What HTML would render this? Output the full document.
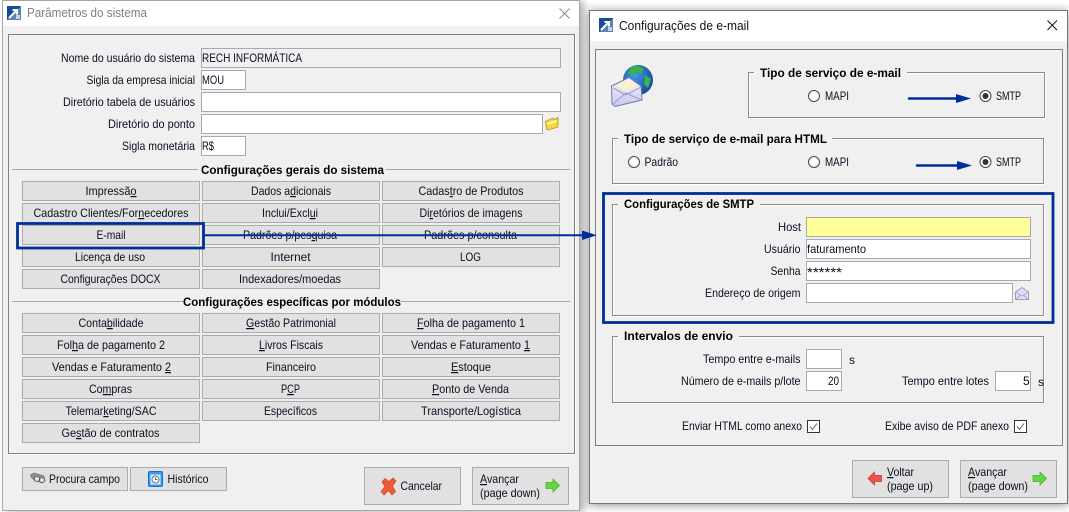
<!DOCTYPE html>
<html lang="pt"><head><meta charset="utf-8"><title>Configurações de e-mail</title>
<style>
html,body{margin:0;padding:0;background:#fff;width:1069px;height:512px;overflow:hidden}
.w{position:absolute;background:#f0f0f0;box-sizing:border-box}
svg{position:absolute;left:0;top:0}
text{font-family:"Liberation Sans",sans-serif;font-size:12px;fill:#0c0c20}
.m{text-anchor:middle}.e{text-anchor:end}
.h{font-weight:bold;fill:#000}
.b{fill:#e1e1e1;stroke:#ababab}
.i{fill:#fff;stroke:#a8a8b0}
.g{fill:none;stroke:#fff}
.g2{fill:none;stroke:#8a8a8a}
.p{fill:none;stroke:#808080}
.u{text-decoration:underline}
.bl{fill:none;stroke:#002e98}
</style></head><body>
<div class="w" style="left:2px;top:0;width:578px;height:511px;border:1px solid #a6a6a6;box-shadow:4px 1px 7px rgba(0,0,0,.3)"></div>
<div class="w" style="left:589px;top:10px;width:479px;height:494px;border:1px solid #777;box-shadow:0 1px 9px rgba(0,0,0,.45)"></div>
<svg width="1069" height="512" viewBox="0 0 1069 512" xmlns="http://www.w3.org/2000/svg">
<defs>
<radialGradient id="glb" cx=".4" cy=".35" r=".75"><stop offset="0" stop-color="#3f9be6"/><stop offset="1" stop-color="#0f3f92"/></radialGradient>
<linearGradient id="env" x1="0" y1="0" x2="0" y2="1"><stop offset="0" stop-color="#f4f4ff"/><stop offset="1" stop-color="#c8c8ee"/></linearGradient>
<g id="app"><rect width="14" height="14" fill="#174a98"/><path d="M0 14 L14 0 V14Z" fill="#5c80b8"/><path d="M2 12 L9 5 M5.5 4 H10 V8.5" stroke="#fff" stroke-width="2" fill="none"/><rect x="9" y="9" width="4" height="4" fill="#c6d2e6"/></g>
<g id="ga"><path d="M0 3.5 H7 V0 L13.5 6.5 L7 13 V9.5 H0Z" fill="#62d83f" stroke="#4aa832" stroke-width=".7"/></g>
<g id="ra"><path d="M13.5 3.5 H6.5 V0 L0 6.5 L6.5 13 V9.5 H13.5Z" fill="#f4504a" stroke="#c03a36" stroke-width=".7"/></g>
<g id="r0"><circle r="5.5" fill="#fff" stroke="#444" stroke-width="1"/></g>
<g id="r1"><circle r="5.5" fill="#fff" stroke="#444" stroke-width="1"/><circle r="3" fill="#333"/></g>
<g id="chk"><rect x=".5" y=".5" width="12" height="12" fill="#fff" stroke="#333"/><path d="M3 6.5 L5.5 9.5 L10 3.5" fill="none" stroke="#777" stroke-width="1.1"/></g>
</defs>

<!-- LEFT WINDOW -->
<rect x="3" y="1" width="576" height="25" fill="#fff"/>
<use href="#app" x="7" y="6"/>
<text x="27" y="17" textLength="120" lengthAdjust="spacingAndGlyphs" style="font-size:13px;fill:#7f7f7f">Parâmetros do sistema</text>
<path d="M559.5 8.5 L569.5 18.5 M569.5 8.5 L559.5 18.5" stroke="#8a8a8a" fill="none"/>
<rect x="8.5" y="34.5" width="566" height="419" class="p"/>
<path d="M575.5 34 V454.5 H8" stroke="#fff" fill="none"/>

<text class="e" x="195" y="62" textLength="134" lengthAdjust="spacingAndGlyphs">Nome do usuário do sistema</text>
<text class="e" x="195" y="84" textLength="108.5" lengthAdjust="spacingAndGlyphs">Sigla da empresa inicial</text>
<text class="e" x="195" y="106" textLength="132" lengthAdjust="spacingAndGlyphs">Diretório tabela de usuários</text>
<text class="e" x="195" y="128" textLength="87" lengthAdjust="spacingAndGlyphs">Diretório do ponto</text>
<text class="e" x="195" y="150" textLength="73" lengthAdjust="spacingAndGlyphs">Sigla monetária</text>

<rect x="201.5" y="48.5" width="359" height="19" fill="#f0f0f0" stroke="#a8a8b0"/>
<rect x="201.5" y="70.5" width="44" height="19" class="i"/>
<rect x="201.5" y="92.5" width="359" height="19" class="i"/>
<rect x="201.5" y="114.5" width="341" height="19" class="i"/>
<rect x="201.5" y="136.5" width="44" height="19" class="i"/>
<text x="202" y="62" textLength="100" lengthAdjust="spacingAndGlyphs">RECH INFORMÁTICA</text>
<text x="202" y="84" textLength="22" lengthAdjust="spacingAndGlyphs">MOU</text>
<text x="202" y="150" textLength="12" lengthAdjust="spacingAndGlyphs">R$</text>
<path d="M545.5 121.5 L553 118 L554 119.5 L558 117.5 L558 127 L548 130 L546.5 129 Z" fill="#f6d93e" stroke="#b6922a" stroke-width=".8"/>
<path d="M547.5 123 L556.5 120 V122 L548 125Z" fill="#fff6b0"/>

<path d="M12 169.5 H198 M386 169.5 H570" stroke="#a8a8a8"/>
<text class="h" x="201" y="174" textLength="183" lengthAdjust="spacingAndGlyphs">Configurações gerais do sistema</text>

<rect x="22.5" y="181.5" width="177" height="19" class="b"/><rect x="202.5" y="181.5" width="177" height="19" class="b"/><rect x="382.5" y="181.5" width="177" height="19" class="b"/>
<rect x="22.5" y="203.5" width="177" height="19" class="b"/><rect x="202.5" y="203.5" width="177" height="19" class="b"/><rect x="382.5" y="203.5" width="177" height="19" class="b"/>
<rect x="22.5" y="225.5" width="177" height="19" class="b"/><rect x="202.5" y="225.5" width="177" height="19" class="b"/><rect x="382.5" y="225.5" width="177" height="19" class="b"/>
<rect x="22.5" y="247.5" width="177" height="19" class="b"/><rect x="202.5" y="247.5" width="177" height="19" class="b"/><rect x="382.5" y="247.5" width="177" height="19" class="b"/>
<rect x="22.5" y="269.5" width="177" height="19" class="b"/><rect x="202.5" y="269.5" width="177" height="19" class="b"/>

<text class="m" x="111" y="195" textLength="51" lengthAdjust="spacingAndGlyphs">Impressã<tspan class="u">o</tspan></text>
<text class="m" x="291" y="195" textLength="80" lengthAdjust="spacingAndGlyphs">Dados a<tspan class="u">d</tspan>icionais</text>
<text class="m" x="471" y="195" textLength="105" lengthAdjust="spacingAndGlyphs">Cadas<tspan class="u">t</tspan>ro de Produtos</text>
<text class="m" x="111" y="217" textLength="155" lengthAdjust="spacingAndGlyphs">Cadastro Clientes/For<tspan class="u">n</tspan>ecedores</text>
<text class="m" x="290" y="217" textLength="56" lengthAdjust="spacingAndGlyphs">Inclui/Excl<tspan class="u">u</tspan>i</text>
<text class="m" x="471" y="217" textLength="103" lengthAdjust="spacingAndGlyphs">Di<tspan class="u">r</tspan>etórios de imagens</text>
<text class="m" x="111" y="239" textLength="29" lengthAdjust="spacingAndGlyphs">E-mail</text>
<text class="m" x="290" y="239" textLength="94" lengthAdjust="spacingAndGlyphs">Padrões p/pes<tspan class="u">q</tspan>uisa</text>
<text class="m" x="470.5" y="239" textLength="93" lengthAdjust="spacingAndGlyphs">Padrões p/consulta</text>
<text class="m" x="110" y="261" textLength="70" lengthAdjust="spacingAndGlyphs">Licença de uso</text>
<text class="m" x="290.5" y="261" textLength="40" lengthAdjust="spacingAndGlyphs">Internet</text>
<text class="m" x="470.5" y="261" textLength="21" lengthAdjust="spacingAndGlyphs">LOG</text>
<text class="m" x="110.5" y="283" textLength="100" lengthAdjust="spacingAndGlyphs">Configurações DOCX</text>
<text class="m" x="290" y="283" textLength="102" lengthAdjust="spacingAndGlyphs">Indexadores/moedas</text>

<path d="M12 301.5 H183 M401 301.5 H570" stroke="#a8a8a8"/>
<text class="h" x="183" y="306" textLength="218" lengthAdjust="spacingAndGlyphs">Configurações específicas por módulos</text>

<rect x="22.5" y="313.5" width="177" height="19" class="b"/><rect x="202.5" y="313.5" width="177" height="19" class="b"/><rect x="382.5" y="313.5" width="177" height="19" class="b"/>
<rect x="22.5" y="335.5" width="177" height="19" class="b"/><rect x="202.5" y="335.5" width="177" height="19" class="b"/><rect x="382.5" y="335.5" width="177" height="19" class="b"/>
<rect x="22.5" y="357.5" width="177" height="19" class="b"/><rect x="202.5" y="357.5" width="177" height="19" class="b"/><rect x="382.5" y="357.5" width="177" height="19" class="b"/>
<rect x="22.5" y="379.5" width="177" height="19" class="b"/><rect x="202.5" y="379.5" width="177" height="19" class="b"/><rect x="382.5" y="379.5" width="177" height="19" class="b"/>
<rect x="22.5" y="401.5" width="177" height="19" class="b"/><rect x="202.5" y="401.5" width="177" height="19" class="b"/><rect x="382.5" y="401.5" width="177" height="19" class="b"/>
<rect x="22.5" y="423.5" width="177" height="19" class="b"/>

<text class="m" x="111" y="327" textLength="65" lengthAdjust="spacingAndGlyphs">Conta<tspan class="u">b</tspan>ilidade</text>
<text class="m" x="291" y="327" textLength="90" lengthAdjust="spacingAndGlyphs"><tspan class="u">G</tspan>estão Patrimonial</text>
<text class="m" x="471" y="327" textLength="108" lengthAdjust="spacingAndGlyphs"><tspan class="u">F</tspan>olha de pagamento 1</text>
<text class="m" x="111" y="349" textLength="108" lengthAdjust="spacingAndGlyphs">Fol<tspan class="u">h</tspan>a de pagamento 2</text>
<text class="m" x="291" y="349" textLength="64" lengthAdjust="spacingAndGlyphs"><tspan class="u">L</tspan>ivros Fiscais</text>
<text class="m" x="470.5" y="349" textLength="119" lengthAdjust="spacingAndGlyphs">Vendas e Faturamento <tspan class="u">1</tspan></text>
<text class="m" x="111.5" y="371" textLength="119" lengthAdjust="spacingAndGlyphs">Vendas e Faturamento <tspan class="u">2</tspan></text>
<text class="m" x="291" y="371" textLength="50" lengthAdjust="spacingAndGlyphs">Financeiro</text>
<text class="m" x="471" y="371" textLength="40" lengthAdjust="spacingAndGlyphs"><tspan class="u">E</tspan>stoque</text>
<text class="m" x="110.5" y="393" textLength="43" lengthAdjust="spacingAndGlyphs">Co<tspan class="u">m</tspan>pras</text>
<text class="m" x="290.5" y="393" textLength="19" lengthAdjust="spacingAndGlyphs">P<tspan class="u">C</tspan>P</text>
<text class="m" x="470.5" y="393" textLength="77" lengthAdjust="spacingAndGlyphs"><tspan class="u">P</tspan>onto de Venda</text>
<text class="m" x="111" y="415" textLength="91" lengthAdjust="spacingAndGlyphs">Telemar<tspan class="u">k</tspan>eting/SAC</text>
<text class="m" x="290.5" y="415" textLength="53" lengthAdjust="spacingAndGlyphs">Específicos</text>
<text class="m" x="471" y="415" textLength="100" lengthAdjust="spacingAndGlyphs">Transporte/Logística</text>
<text class="m" x="110.5" y="437" textLength="98" lengthAdjust="spacingAndGlyphs">Ge<tspan class="u">s</tspan>tão de contratos</text>

<rect x="22.5" y="467.5" width="105" height="23" class="b"/>
<rect x="130.5" y="467.5" width="96" height="23" class="b"/>
<g>
<path d="M30.5 475 L34 473 L44 476 L45 481 L42 483 L38 481.5 L35 481 L31 477Z" fill="#8f8f8f" stroke="#666" stroke-width=".6"/>
<circle cx="37" cy="479" r="2.4" fill="#dfe6ee" stroke="#555" stroke-width=".7"/><circle cx="42" cy="480" r="2.4" fill="#dfe6ee" stroke="#555" stroke-width=".7"/>
</g>
<text x="49" y="483" textLength="71" lengthAdjust="spacingAndGlyphs">Procura campo</text>
<rect x="148.5" y="471.5" width="14" height="15" rx="1.5" fill="#3a9bef" stroke="#1a6fc4"/>
<rect x="150.5" y="474.5" width="10" height="10" fill="#d9ecfa"/>
<circle cx="155.5" cy="479.5" r="3.5" fill="#fff" stroke="#5a7a98"/><path d="M155.5 477.5 V479.5 H157.5" stroke="#445" fill="none" stroke-width=".8"/>
<text x="167.5" y="483" textLength="41" lengthAdjust="spacingAndGlyphs">Histórico</text>

<rect x="364.5" y="467.5" width="96" height="37" class="b"/>
<rect x="472.5" y="467.5" width="96" height="37" class="b"/>
<path d="M382 482 L385 478.5 L389 481.5 L393 478 L396 481 L392.5 486 L395.5 491.5 L392 495 L388.5 490.5 L384 495 L381 491.5 L385 486.5Z" fill="#ef5c33" stroke="#c8452a" stroke-width=".7"/>
<text x="400.5" y="490" textLength="41.5" lengthAdjust="spacingAndGlyphs">Cancelar</text>
<text x="480" y="483" textLength="39" lengthAdjust="spacingAndGlyphs"><tspan class="u">A</tspan>vançar</text>
<text x="480" y="497" textLength="60" lengthAdjust="spacingAndGlyphs">(page down)</text>
<use href="#ga" x="546" y="479"/>

<!-- RIGHT WINDOW -->
<rect x="590" y="11" width="477" height="30" fill="#fff"/>
<use href="#app" x="599" y="18"/>
<text x="619" y="30" textLength="130" lengthAdjust="spacingAndGlyphs" style="font-size:13px;fill:#111">Configurações de e-mail</text>
<path d="M1047.5 20.5 L1057 30 M1057 20.5 L1047.5 30" stroke="#111" fill="none"/>
<rect x="595.5" y="49.5" width="467" height="396" class="p"/>

<!-- globe/envelope -->
<circle cx="638" cy="80" r="15" fill="url(#glb)"/>
<path d="M631 67 Q638 64 644 69 L641 74 L636 72 L632 76 L628 73Z M645 75 L651 79 L648 88 L644 84Z M636 84 L640 85 L642 92 L637 94Z" fill="#3fb04a"/>
<path d="M611.5 86 L629 77.5 L641 86 L642 100 L615 106.5 L612 104Z" fill="url(#env)" stroke="#7a7ab0" stroke-width="1"/>
<path d="M616 85 L629 80 L637 86 L626 92Z" fill="#fdf0cc"/>
<path d="M613 104 L626 93 L641 100 M613 88 L626 95 L641 87" fill="none" stroke="#9a9ac8"/>

<!-- group 1 -->
<rect x="749.5" y="73.5" width="296" height="45" class="g"/>
<rect x="748.5" y="72.5" width="296" height="45" class="g2"/>
<rect x="754" y="68" width="153" height="10" fill="#f0f0f0"/>
<text class="h" x="760" y="77" textLength="141" lengthAdjust="spacingAndGlyphs">Tipo de serviço de e-mail</text>
<use href="#r0" x="814" y="96"/><text x="825" y="100" textLength="24" lengthAdjust="spacingAndGlyphs">MAPI</text>
<use href="#r1" x="985.5" y="96"/><text x="996" y="100" textLength="25" lengthAdjust="spacingAndGlyphs">SMTP</text>
<path d="M909 98.5 H961" stroke="#002e98" stroke-width="2.6" stroke-linecap="round"/><path d="M956 94 L971 98.5 L956 103Z" fill="#002e98"/>

<!-- group 2 -->
<rect x="613.5" y="139.5" width="431" height="45" class="g"/>
<rect x="612.5" y="138.5" width="431" height="45" class="g2"/>
<rect x="618" y="133" width="214" height="10" fill="#f0f0f0"/>
<text class="h" x="624" y="143" textLength="203" lengthAdjust="spacingAndGlyphs">Tipo de serviço de e-mail para HTML</text>
<use href="#r0" x="634" y="162"/><text x="644.5" y="166" textLength="33.5" lengthAdjust="spacingAndGlyphs">Padrão</text>
<use href="#r0" x="814" y="162"/><text x="825" y="166" textLength="24" lengthAdjust="spacingAndGlyphs">MAPI</text>
<use href="#r1" x="985.5" y="162"/><text x="996" y="166" textLength="25" lengthAdjust="spacingAndGlyphs">SMTP</text>
<path d="M917 165.5 H962" stroke="#002e98" stroke-width="2.6" stroke-linecap="round"/><path d="M957 161 L972 165.5 L957 170Z" fill="#002e98"/>

<!-- group smtp -->
<rect x="613.5" y="205.5" width="431" height="111" class="g"/>
<rect x="612.5" y="204.5" width="431" height="111" class="g2"/>
<rect x="618" y="199" width="142" height="10" fill="#f0f0f0"/>
<text class="h" x="624" y="208" textLength="130" lengthAdjust="spacingAndGlyphs">Configurações de SMTP</text>
<text class="e" x="801" y="231" textLength="23" lengthAdjust="spacingAndGlyphs">Host</text>
<text class="e" x="800.5" y="253" textLength="36.5" lengthAdjust="spacingAndGlyphs">Usuário</text>
<text class="e" x="800.5" y="275" textLength="30" lengthAdjust="spacingAndGlyphs">Senha</text>
<text class="e" x="800.5" y="297" textLength="95.5" lengthAdjust="spacingAndGlyphs">Endereço de origem</text>
<rect x="806.5" y="217.5" width="224" height="19" fill="#ffff99" stroke="#a8a8a0"/>
<rect x="806.5" y="239.5" width="224" height="19" class="i"/>
<rect x="806.5" y="261.5" width="224" height="19" class="i"/>
<rect x="806.5" y="283.5" width="206" height="19" class="i"/>
<text x="807" y="253" textLength="59" lengthAdjust="spacingAndGlyphs">faturamento</text>
<text x="807" y="277" textLength="35" lengthAdjust="spacingAndGlyphs" style="font-size:14px">******</text>
<path d="M1015.5 292 L1022 287.5 L1028.5 292 V299.5 H1015.5Z" fill="#e0e0f4" stroke="#9a9ac4"/><path d="M1016 292 L1022 296 L1028 292 M1016 299 L1020.5 295 M1028 299 L1023.5 295" stroke="#a8a8cc" fill="none"/>

<!-- group interval -->
<rect x="613.5" y="337.5" width="431" height="66" class="g"/>
<rect x="612.5" y="336.5" width="431" height="66" class="g2"/>
<rect x="618" y="332" width="121" height="10" fill="#f0f0f0"/>
<text class="h" x="624" y="340" textLength="109" lengthAdjust="spacingAndGlyphs">Intervalos de envio</text>
<text class="e" x="800.5" y="363" textLength="97.5" lengthAdjust="spacingAndGlyphs">Tempo entre e-mails</text>
<text class="e" x="800.5" y="385" textLength="119.5" lengthAdjust="spacingAndGlyphs">Número de e-mails p/lote</text>
<rect x="806.5" y="349.5" width="35" height="19" class="i"/>
<rect x="806.5" y="371.5" width="35" height="19" class="i"/>
<rect x="995.5" y="371.5" width="35" height="19" class="i"/>
<text x="849" y="364">s</text>
<text x="828" y="385" textLength="11" lengthAdjust="spacingAndGlyphs">20</text>
<text x="902" y="385" textLength="87" lengthAdjust="spacingAndGlyphs">Tempo entre lotes</text>
<text x="1023" y="385">5</text>
<text x="1038" y="386">s</text>

<text x="682" y="430" textLength="120" lengthAdjust="spacingAndGlyphs">Enviar HTML como anexo</text>
<use href="#chk" x="807" y="420"/>
<text x="885" y="430" textLength="124" lengthAdjust="spacingAndGlyphs">Exibe aviso de PDF anexo</text>
<use href="#chk" x="1014" y="420"/>

<rect x="852.5" y="460.5" width="96" height="37" class="b"/>
<rect x="960.5" y="460.5" width="96" height="37" class="b"/>
<use href="#ra" x="868" y="472"/>
<text x="887" y="476" textLength="27" lengthAdjust="spacingAndGlyphs"><tspan class="u">V</tspan>oltar</text>
<text x="887" y="490" textLength="46" lengthAdjust="spacingAndGlyphs">(page up)</text>
<text x="968" y="476" textLength="39" lengthAdjust="spacingAndGlyphs"><tspan class="u">A</tspan>vançar</text>
<text x="968" y="490" textLength="60" lengthAdjust="spacingAndGlyphs">(page down)</text>
<use href="#ga" x="1033" y="472"/>

<!-- blue annotations -->
<rect x="17.5" y="223.5" width="186" height="24.5" class="bl" stroke-width="2.8"/>
<path d="M205 235.3 H585" stroke="#002e98" stroke-width="2"/>
<path d="M582 230.5 L597 235.3 L582 240Z" fill="#002e98"/>
<rect x="603.5" y="193.5" width="449.5" height="129" class="bl" stroke-width="2.8"/>
</svg>
</body></html>
